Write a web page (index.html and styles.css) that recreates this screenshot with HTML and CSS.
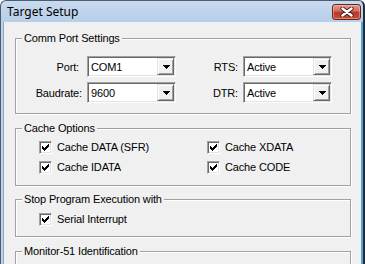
FILE: index.html
```html
<!DOCTYPE html>
<html>
<head>
<meta charset="utf-8">
<title>Target Setup</title>
<link rel="stylesheet" href="styles.css">
</head>
<body>
<div class="window">
  <div class="titlebar">
    <span class="title">Target Setup</span>
    <div class="close">
      <svg width="14" height="10" viewBox="0 0 14 10">
        <path d="M2.5 1.5 L11.5 8.5 M11.5 1.5 L2.5 8.5" stroke="#4a1c18" stroke-width="4.2" stroke-linecap="round" fill="none"/>
        <path d="M2.5 1.5 L11.5 8.5 M11.5 1.5 L2.5 8.5" stroke="#ffffff" stroke-width="2.4" stroke-linecap="round" fill="none"/>
      </svg>
    </div>
  </div>
  <div class="client">
    <fieldset class="group group-comm">
      <legend>Comm Port Settings</legend>
      <div class="comm-grid">
        <span class="lbl lbl-port">Port:</span>
        <div class="combo"><span class="val">COM1</span><span class="drop"><svg width="7" height="4" viewBox="0 0 7 4" shape-rendering="crispEdges"><path d="M0 0h7v1h-1v1h-1v1h-1v1h-1v-1h-1v-1h-1v-1h-1z"/></svg></span></div>
        <span class="lbl">RTS:</span>
        <div class="combo"><span class="val">Active</span><span class="drop"><svg width="7" height="4" viewBox="0 0 7 4" shape-rendering="crispEdges"><path d="M0 0h7v1h-1v1h-1v1h-1v1h-1v-1h-1v-1h-1v-1h-1z"/></svg></span></div>
        <span class="lbl">Baudrate:</span>
        <div class="combo"><span class="val">9600</span><span class="drop"><svg width="7" height="4" viewBox="0 0 7 4" shape-rendering="crispEdges"><path d="M0 0h7v1h-1v1h-1v1h-1v1h-1v-1h-1v-1h-1v-1h-1z"/></svg></span></div>
        <span class="lbl">DTR:</span>
        <div class="combo"><span class="val">Active</span><span class="drop"><svg width="7" height="4" viewBox="0 0 7 4" shape-rendering="crispEdges"><path d="M0 0h7v1h-1v1h-1v1h-1v1h-1v-1h-1v-1h-1v-1h-1z"/></svg></span></div>
      </div>
    </fieldset>

    <fieldset class="group group-cache">
      <legend>Cache Options</legend>
      <div class="check-grid">
        <label class="check"><span class="cb"><svg width="11" height="11" viewBox="0 0 11 11" shape-rendering="crispEdges"><path d="M8 2h1v1h-1zM7 3h2v1h-2zM2 4h1v1h-1zM6 4h3v1h-3zM2 5h2v1h-2zM5 5h3v1h-3zM2 6h5v1h-5zM3 7h3v1h-3zM4 8h1v1h-1z"/></svg></span>Cache DATA (SFR)</label>
        <label class="check"><span class="cb"><svg width="11" height="11" viewBox="0 0 11 11" shape-rendering="crispEdges"><path d="M8 2h1v1h-1zM7 3h2v1h-2zM2 4h1v1h-1zM6 4h3v1h-3zM2 5h2v1h-2zM5 5h3v1h-3zM2 6h5v1h-5zM3 7h3v1h-3zM4 8h1v1h-1z"/></svg></span>Cache XDATA</label>
        <label class="check"><span class="cb"><svg width="11" height="11" viewBox="0 0 11 11" shape-rendering="crispEdges"><path d="M8 2h1v1h-1zM7 3h2v1h-2zM2 4h1v1h-1zM6 4h3v1h-3zM2 5h2v1h-2zM5 5h3v1h-3zM2 6h5v1h-5zM3 7h3v1h-3zM4 8h1v1h-1z"/></svg></span>Cache IDATA</label>
        <label class="check"><span class="cb"><svg width="11" height="11" viewBox="0 0 11 11" shape-rendering="crispEdges"><path d="M8 2h1v1h-1zM7 3h2v1h-2zM2 4h1v1h-1zM6 4h3v1h-3zM2 5h2v1h-2zM5 5h3v1h-3zM2 6h5v1h-5zM3 7h3v1h-3zM4 8h1v1h-1z"/></svg></span>Cache CODE</label>
      </div>
    </fieldset>

    <fieldset class="group group-stop">
      <legend>Stop Program Execution with</legend>
      <div class="check-grid">
        <label class="check"><span class="cb"><svg width="11" height="11" viewBox="0 0 11 11" shape-rendering="crispEdges"><path d="M8 2h1v1h-1zM7 3h2v1h-2zM2 4h1v1h-1zM6 4h3v1h-3zM2 5h2v1h-2zM5 5h3v1h-3zM2 6h5v1h-5zM3 7h3v1h-3zM4 8h1v1h-1z"/></svg></span>Serial Interrupt</label>
      </div>
    </fieldset>

    <fieldset class="group group-monitor">
      <legend>Monitor-51 Identification</legend>
      <div class="monitor-body"></div>
    </fieldset>
  </div>
</div>
</body>
</html>
```

FILE: styles.css
```css
* { box-sizing: border-box; }
html, body { margin: 0; padding: 0; }
body {
  width: 365px;
  height: 264px;
  overflow: hidden;
  background: #ffffff;
  font-family: "Liberation Sans", Arial, sans-serif;
  font-size: 11px;
  color: #000;
}
.window {
  width: 365px;
  height: 264px;
  display: flex;
  flex-direction: column;
  border-top: 1px solid #4e5c6e;
  border-left: 1px solid #4e5c6e;
  border-right: 2px solid #1f2d3c;
  border-radius: 6px 6px 0 0;
  background: linear-gradient(#c8daef, #b7cee9 21px, #bcd2eb 22px);
  overflow: hidden;
}
.titlebar {
  height: 21px;
  flex: none;
  display: flex;
  align-items: flex-start;
  justify-content: space-between;
  padding-left: 6px;
}
.title {
  font-family: "Noto Sans", "Liberation Sans", sans-serif;
  font-size: 12px;
  line-height: 16px;
  margin-top: 3px;
  color: #000;
}
.close {
  width: 29px;
  height: 16px;
  margin-top: 3px;
  margin-right: 2px;
  border: 1px solid #6a231d;
  border-radius: 3px;
  background: linear-gradient(#e49a8b, #d06e5e 42%, #b83a29 54%, #c65038);
  box-shadow: inset 0 0 0 1px rgba(255, 210, 200, 0.45);
  display: flex;
  align-items: center;
  justify-content: center;
}
.close svg { display: block; }
.client {
  flex: 1;
  margin-left: 2px;
  border-left: 1px solid #8ea8c6;
  border-right: 2px solid #5aa2dc;
  background: #f0f0f0;
  padding: 10px 10px 0 11px;
  display: flex;
  flex-direction: column;
}
.group {
  margin: 0;
  padding: 0;
  min-width: 0;
  border: 1px solid #a0a0a0;
  box-shadow: inset 1px 1px 0 #ffffff, 1px 1px 0 #ffffff;
}
.group legend {
  margin-left: 6px;
  padding: 0 2px;
  height: 13px;
  line-height: 13px;
  background: #f0f0f0;
  letter-spacing: -0.15px;
}
.group-comm { padding: 11px 0 10px 0; }
.group-cache { margin-top: 8px; padding: 6px 0 11px 0; }
.group-stop { margin-top: 7px; padding: 7px 0 10px 0; }
.group-monitor { margin-top: 8px; flex: 1; }
.monitor-body { height: 40px; }

.comm-grid {
  display: grid;
  grid-template-columns: 71px 89px 67px 89px;
  grid-auto-rows: 21px;
  row-gap: 5px;
}
.lbl {
  justify-self: end;
  align-self: center;
  padding-right: 5px;
  line-height: 21px;
  padding-top: 1px;
  letter-spacing: -0.15px;
}
.lbl-port { padding-right: 8px; }
.combo {
  width: 89px;
  height: 21px;
  display: flex;
  background: #fff;
  border: 1px solid;
  border-color: #a0a0a0 #ffffff #ffffff #a0a0a0;
  box-shadow: inset 1px 1px 0 #696969, inset -1px -1px 0 #e3e3e3;
  padding: 1px;
}
.combo .val {
  flex: 1;
  padding-left: 2px;
  line-height: 17px;
  padding-top: 1px;
  letter-spacing: -0.15px;
}
.drop {
  width: 17px;
  height: 17px;
  flex: none;
  background: #f0f0f0;
  border: 1px solid;
  border-color: #e3e3e3 #696969 #696969 #e3e3e3;
  box-shadow: inset 1px 1px 0 #ffffff, inset -1px -1px 0 #a0a0a0;
  display: flex;
  align-items: center;
  justify-content: center;
  padding-left: 2px;
}
.drop svg { display: block; fill: #000; }

.check-grid {
  display: grid;
  grid-template-columns: 168px auto;
  grid-auto-rows: 13px;
  row-gap: 7px;
  padding-left: 23px;
}
.check {
  display: flex;
  align-items: center;
  gap: 5px;
  white-space: nowrap;
  letter-spacing: -0.15px;
  line-height: 13px;
}
.cb {
  width: 13px;
  height: 13px;
  flex: none;
  background: #fff;
  border: 1px solid;
  border-color: #a0a0a0 #ffffff #ffffff #a0a0a0;
  box-shadow: inset 1px 1px 0 #696969, inset -1px -1px 0 #e3e3e3;
}
.cb svg { display: block; fill: #000; }
```
